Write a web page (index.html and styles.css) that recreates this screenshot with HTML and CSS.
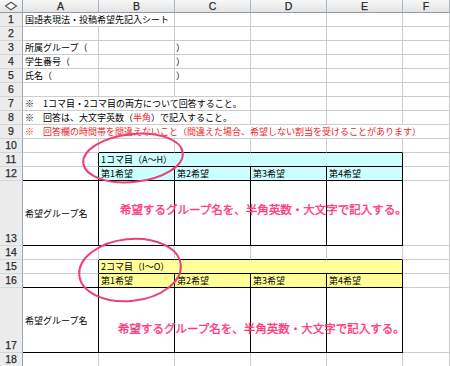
FILE: index.html
```html
<!DOCTYPE html>
<html lang="ja">
<head>
  <meta charset="UTF-8">
  <title>投稿希望先記入シート</title>
  <link rel="stylesheet" href="styles.css">
</head>
<body>
  <div class="sheet">
    <!-- column headers -->
    <div class="corner">
      <svg width="14" height="10" viewBox="0 0 14 10"><polygon points="1.5,5 7,1.2 12.5,5 7,8.8" fill="#fafafa" stroke="#555" stroke-width="1.1"/></svg>
    </div>
    <div class="colh">A</div>
    <div class="colh">B</div>
    <div class="colh">C</div>
    <div class="colh">D</div>
    <div class="colh">E</div>
    <div class="colh">F</div>

    <!-- 1 -->
    <div class="rowh">1</div>
    <div class="span2">国語表現法・投稿希望先記入シート</div>
    <div></div><div></div><div></div><div></div>
    <!-- 2 -->
    <div class="rowh">2</div>
    <div></div><div></div><div></div><div></div><div></div><div></div>
    <!-- 3 -->
    <div class="rowh">3</div>
    <div>所属グループ（</div><div></div><div class="paren">）</div><div></div><div></div><div></div>
    <!-- 4 -->
    <div class="rowh">4</div>
    <div>学生番号（</div><div></div><div class="paren">）</div><div></div><div></div><div></div>
    <!-- 5 -->
    <div class="rowh">5</div>
    <div>氏名（</div><div></div><div class="paren">）</div><div></div><div></div><div></div>
    <!-- 6 -->
    <div class="rowh">6</div>
    <div></div><div></div><div></div><div></div><div></div><div></div>
    <!-- 7 -->
    <div class="rowh">7</div>
    <div class="span3">※　1コマ目・2コマ目の両方について回答すること。</div>
    <div></div><div></div><div></div>
    <!-- 8 -->
    <div class="rowh">8</div>
    <div class="span3">※　回答は、大文字英数（<span class="red">半角</span>）で記入すること。</div>
    <div></div><div></div><div></div>
    <!-- 9 -->
    <div class="rowh">9</div>
    <div class="span6 red">※　回答欄の時間帯を間違えないこと（間違えた場合、希望しない割当を受けることがあります）</div>
    <!-- 10 -->
    <div class="rowh">10</div>
    <div></div><div class="bb"></div><div class="bb"></div><div class="bb"></div><div class="bb"></div><div></div>
    <!-- 11 -->
    <div class="rowh">11</div>
    <div class="br"></div>
    <div class="span4 cyan br bb">1コマ目（A〜H）</div>
    <div></div>
    <!-- 12 -->
    <div class="rowh">12</div>
    <div class="br bb"></div>
    <div class="cyan br bb">第1希望</div>
    <div class="cyan br bb">第2希望</div>
    <div class="cyan br bb">第3希望</div>
    <div class="cyan br bb">第4希望</div>
    <div></div>
    <!-- 13 -->
    <div class="rowh tall">13</div>
    <div class="mid br bb">希望グループ名</div>
    <div class="br bb"></div><div class="br bb"></div><div class="br bb"></div><div class="br bb"></div>
    <div></div>
    <!-- 14 -->
    <div class="rowh">14</div>
    <div></div><div class="bb"></div><div class="bb"></div><div class="bb"></div><div class="bb"></div><div></div>
    <!-- 15 -->
    <div class="rowh">15</div>
    <div class="br"></div>
    <div class="span4 yellow br bb">2コマ目（I〜O）</div>
    <div></div>
    <!-- 16 -->
    <div class="rowh">16</div>
    <div class="br bb"></div>
    <div class="yellow br bb">第1希望</div>
    <div class="yellow br bb">第2希望</div>
    <div class="yellow br bb">第3希望</div>
    <div class="yellow br bb">第4希望</div>
    <div></div>
    <!-- 17 -->
    <div class="rowh tall">17</div>
    <div class="mid br bb">希望グループ名</div>
    <div class="br bb"></div><div class="br bb"></div><div class="br bb"></div><div class="br bb"></div>
    <div></div>
    <!-- 18 -->
    <div class="rowh">18</div>
    <div></div><div></div><div></div><div></div><div></div><div></div>

    <!-- annotations over the sheet -->
    <p class="note note1">希望するグループ名を、半角英数・大文字で記入する。</p>
    <p class="note note2">希望するグループ名を、半角英数・大文字で記入する。</p>
    <svg class="marks" width="450" height="366" viewBox="0 0 450 366">
      <ellipse cx="133" cy="158" rx="50" ry="24" transform="rotate(-6 133 158)"/>
      <ellipse cx="130" cy="270" rx="51" ry="31" transform="rotate(-6 130 270)"/>
    </svg>
  </div>
</body>
</html>
```

FILE: styles.css
```css
* {
  box-sizing: border-box;
}

body {
  margin: 0;
  background-color: #fff;
  font-family: "Noto Sans CJK JP", sans-serif;
  overflow: hidden;
}

.sheet {
  position: relative;
  display: grid;
  grid-template-columns: 23px repeat(5, 76px) 1fr;
  grid-template-rows: 13px repeat(12, 14px) 65px repeat(3, 14px) 65px 14px;
  width: 450px;
}

.sheet > div {
  min-width: 0;
  padding-left: 2px;
  border-right: 1px solid #cdcdcd;
  border-bottom: 1px solid #cdcdcd;
  font-size: 9px;
  line-height: 13px;
  color: #000;
  white-space: nowrap;
  overflow: hidden;
}

/* headers */
.sheet > .corner,
.sheet > .colh,
.sheet > .rowh {
  padding: 0;
  font-family: "Liberation Sans", Arial, sans-serif;
  font-size: 10.5px;
  color: #2b2b2b;
  text-align: center;
  background: #ececec;
  -webkit-text-stroke: 0.25px #2b2b2b;
}

.sheet > .corner {
  display: flex;
  align-items: center;
  justify-content: center;
  border-right-color: #9aa8b5;
  border-bottom-color: #8d9cab;
  background: linear-gradient(#f7f7f7, #e4e4e4);
}

.sheet > .colh {
  line-height: 12px;
  border-right-color: #a9b5c0;
  border-bottom-color: #8d9cab;
  background: linear-gradient(#f7f7f7, #e4e4e4);
}

.sheet > .rowh {
  border-right-color: #9aa8b5;
  border-bottom-color: #d3d7db;
}

.sheet > .rowh.tall {
  display: flex;
  align-items: flex-end;
  justify-content: center;
}

/* merged cells */
.span2 { grid-column: span 2; }
.span3 { grid-column: span 3; }
.span4 { grid-column: span 4; }
.span6 { grid-column: span 6; }

.sheet > .paren {
  padding-left: 1px;
}

.sheet > .mid {
  display: flex;
  align-items: center;
}

.red,
.sheet > .red {
  color: #ee1c1c;
}

.cyan {
  background-color: #ccffff;
}

.yellow {
  background-color: #ffff99;
}

/* black cell borders */
.sheet > .bb {
  border-bottom-color: #000;
}

.sheet > .br {
  border-right-color: #000;
}

/* pink annotation */
.note {
  position: absolute;
  margin: 0;
  font-size: 11.5px;
  font-weight: normal;
  line-height: 14px;
  color: #ff3a7c;
  white-space: nowrap;
  -webkit-text-stroke: 0.35px #ff3a7c;
}

.note1 {
  left: 120px;
  top: 202px;
}

.note2 {
  left: 118px;
  top: 321px;
}

.marks {
  position: absolute;
  left: 0;
  top: 0;
  pointer-events: none;
}

.marks ellipse {
  fill: none;
  stroke: #ec4175;
  stroke-width: 2;
}
```
